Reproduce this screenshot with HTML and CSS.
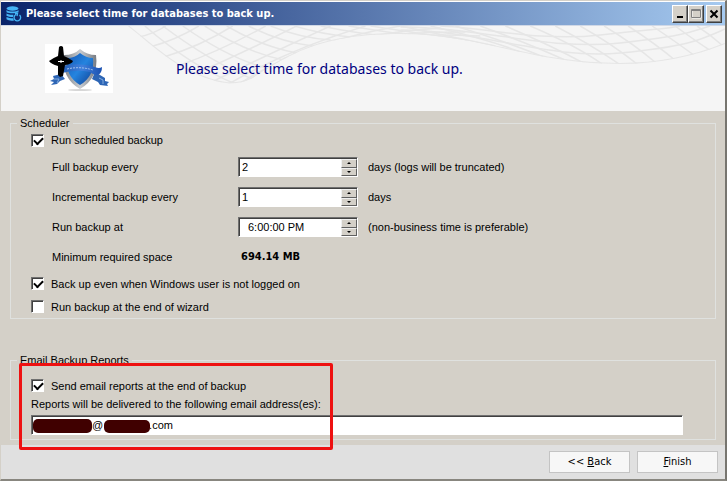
FILE: index.html
```html
<!DOCTYPE html>
<html lang="en">
<head>
<meta charset="utf-8">
<title>Please select time for databases to back up.</title>
<link rel="stylesheet" href="styles.css">
</head>
<body>
<form class="window">
  <header class="titlebar">
    <svg class="app-icon" viewBox="0 0 16 16" aria-hidden="true">
      <g fill="#45b4f5"><ellipse cx="6.5" cy="2.5" rx="6" ry="2.2"/><path d="M.5 4c2 2 10 2 12 0v2.2c-3 1.400-9 1.400-12 0zM.5 7.500c2 1.200 5 1.500 7 1.200L7 11C4 11 2 10.800.5 9.800zM.5 11c2 1 4 1.200 6.500 1.200l1 2.300C5 15 2 14.500.5 13.300z"/></g>
      <path d="M10 8.500a3.300 3.300 0 1 0 3.500.5M9 7.500l2.500 0-.5 2.500" fill="none" stroke="#45b4f5" stroke-width="1.300"/>
    </svg>
    <h1 class="caption">Please select time for databases to back up.</h1>
    <div class="window-buttons">
      <button type="button" aria-label="Minimize"><svg viewBox="0 0 12 12"><path d="M3 8h6v2H3z"/></svg></button>
      <button type="button" aria-label="Maximize"><svg viewBox="0 0 12 12"><path d="M2 2h9v8H2z" fill="none" stroke="#fff"/><path d="M1.500 1.500h9v8h-9z M1 2.500h10" fill="none" stroke="#808080"/></svg></button>
      <button type="button" aria-label="Close" class="close"><svg viewBox="0 0 12 12"><path d="M2.500 2.500l7 7M9.500 2.500l-7 7" stroke="#000" stroke-width="2"/></svg></button>
    </div>
  </header>

  <section class="banner">
    <svg class="mesh" viewBox="0 0 725 85" preserveAspectRatio="none" aria-hidden="true">
      <clipPath id="wave"><path d="M127 0C150 18 170 38 200 50C220 58 235 60 250 53C290 28 320 8 400 8C480 8 530 38 620 38C660 38 695 30 725 18V0Z"/></clipPath>
      <g clip-path="url(#wave)" fill="none" stroke="#e6e6e6" stroke-width="1.500">
        <path d="M127 0C150 18 170 38 200 50C220 58 235 60 250 53C290 28 320 8 400 8C480 8 530 38 620 38C660 38 695 30 725 18" stroke-width="2"/>
        <path d="M144 0Q190 40 235 58M162 0Q210 36 254 54M182 0Q230 34 270 43M204 0Q245 26 283 34M226 0Q260 20 296 27M248 0Q280 16 312 20M270 0Q300 12 330 14M294 0Q320 8 350 11M320 0Q350 6 375 9M348 0L400 8"/>
        <path d="M138 11Q153 8 165 0M149 21Q175 14 198 0M163 31Q200 20 232 0M177 40Q222 24 265 0M194 48Q244 26 296 0M213 55Q264 30 330 0M228 58Q286 24 365 0M240 57Q303 16 400 0M250 53Q320 10 440 2M265 44Q340 5 465 6M282 33Q350 4 480 10"/>
        <path d="M400 4C480 4 550 34 620 27S700 14 725 3M400 1C480 1 550 25 620 17S690 6 710 0M440 0C480 1 540 16 600 9S660 4 680 0"/>
        <path d="M370 0L470 15M400 0L495 20M430 0Q490 14 520 26M455 0Q510 17 543 31M480 0Q535 20 569 36M505 0Q552 20 585 38M530 0Q575 19 602 38M555 0Q590 18 619 38M580 0Q612 18 637 38M604 0Q634 18 656 37M628 0Q656 18 676 35M652 0Q676 16 695 30M675 0Q694 14 711 25M697 0Q711 9 723 20"/>
      </g>
    </svg>
    <svg class="logo" viewBox="0 0 68 49" role="img" aria-label="100% Protection">
      <defs>
        <linearGradient id="steel"><stop stop-color="#7b8086"/><stop offset=".5" stop-color="#c9ccd0"/><stop offset="1" stop-color="#777c83"/></linearGradient>
        <linearGradient id="blue" x2="1" y2="1"><stop stop-color="#1456b4"/><stop offset=".5" stop-color="#2584df"/><stop offset="1" stop-color="#103e92"/></linearGradient>
        <linearGradient id="ribbon"><stop stop-color="#225db5"/><stop offset=".5" stop-color="#3f80dc"/><stop offset="1" stop-color="#1b50b0"/></linearGradient>
      </defs>
      <path fill="#fff" d="M0 0h68v49H0z"/>
      <ellipse cx="35" cy="46" rx="12" ry="1" fill="#d7d7d7"/>
      <path d="M16 30L8 32 9 35 5 37l4 1-3 3 6-1 3-3 5-2zM50 28l10 6 0 3 4 1-2 2 1 2-8-1-2-3-6-3z" fill="#2d65b5"/>
      <path d="M9 35l5 0-2 4M54 34l4 2 0 4" stroke="#82acdf" fill="none"/>
      <path d="M35 5Q42 11 51 11Q54 34 35 45Q16 34 19 11Q29 11 35 5Z" fill="url(#steel)"/>
      <path d="M35 9Q41 14 48 14Q50 32 35 41Q20 32 22 14Q30 14 35 9Z" fill="url(#blue)"/>
      <path d="M17 22Q35 18 50 23 54 25 57 23 57 29 53 31 48 31 45 28 31 25 17 29Z" fill="url(#ribbon)"/>
      <path d="M22 25Q35 22 48 26" stroke="#a6c5ee" stroke-dasharray="2 1" fill="none"/>
      <path d="M14 3Q16 1 18 3L19 12Q24 14 28 17 27 20 20 21L18 32 15 33 13 31 13 22Q6 20 4 17 8 14 13 12Z"/>
      <path d="M13 17.500h6M16 16v3" stroke="#fff"/>
    </svg>
    <h2 class="headline">Please select time for databases to back up.</h2>
  </section>

  <main class="content">
    <fieldset class="group">
      <legend>Scheduler</legend>
      <label class="check first"><input type="checkbox" checked>Run scheduled backup</label>
      <div class="rows">
        <div class="row">
          <label for="full">Full backup every</label>
          <span class="spin"><input id="full" type="text" value="2"><span class="arrows"><button type="button" aria-label="More days"></button><button type="button" aria-label="Fewer days" class="down"></button></span></span>
          <span>days (logs will be truncated)</span>
        </div>
        <div class="row">
          <label for="inc">Incremental backup every</label>
          <span class="spin"><input id="inc" type="text" value="1"><span class="arrows"><button type="button" aria-label="More days"></button><button type="button" aria-label="Fewer days" class="down"></button></span></span>
          <span>days</span>
        </div>
        <div class="row">
          <label for="at">Run backup at</label>
          <span class="spin time"><input id="at" type="text" value="6:00:00 PM"><span class="arrows"><button type="button" aria-label="Later"></button><button type="button" aria-label="Earlier" class="down"></button></span></span>
          <span>(non-business time is preferable)</span>
        </div>
        <div class="row">
          <span>Minimum required space</span>
          <strong>694.14 MB</strong>
        </div>
      </div>
      <label class="check"><input type="checkbox" checked>Back up even when Windows user is not logged on</label>
      <label class="check"><input type="checkbox">Run backup at the end of wizard</label>
    </fieldset>

    <fieldset class="group email">
      <legend>Email Backup Reports</legend>
      <label class="check"><input type="checkbox" checked>Send email reports at the end of backup</label>
      <label class="address-label" for="address">Reports will be delivered to the following email address(es):</label>
      <div class="address">
        <input id="address" type="text" value="                   @               .com">
        <span class="mask user"></span><span class="mask domain"></span>
      </div>
      <div class="highlight"></div>
    </fieldset>
  </main>

  <footer class="footer">
    <button type="button">&lt;&lt; <u>B</u>ack</button>
    <button type="submit"><u>F</u>inish</button>
  </footer>
</form>
</body>
</html>
```
FILE: styles.css
```css
* { box-sizing: border-box; }

body {
  margin: 0;
  background: #d4d0c8;
  color: #000;
  font: 11px/14px "Liberation Sans", Arial, sans-serif;
}

button, input { font: inherit; color: inherit; }

.window {
  display: flex;
  flex-direction: column;
  min-height: 100vh;
  border: 1px solid #d4d0c8;
  border-right: 2px solid #77756f;
  border-bottom: 2px solid #88867f;
}

.titlebar {
  display: flex;
  align-items: center;
  height: 25px;
  padding: 0 3px 0 5px;
  border-top: 1px solid #fff;
  border-bottom: 1px solid #d0d8e6;
  background: linear-gradient(90deg, #0a246a, #a6caf0);
}

.app-icon { width: 16px; height: 16px; margin-right: 4px; }

.caption {
  flex: 1;
  margin: 0;
  color: #fff;
  font: bold 11px/16px "DejaVu Sans Condensed", "DejaVu Sans", sans-serif;
  white-space: nowrap;
}

.window-buttons { display: flex; }

.window-buttons button {
  display: grid;
  place-items: center;
  width: 16px;
  height: 18px;
  padding: 0;
  border: 1px solid;
  border-color: #fff #404040 #404040 #fff;
  background: #d4d0c8;
  box-shadow: inset -1px -1px #808080;
}

.window-buttons .close { margin-left: 2px; }
.window-buttons svg { width: 12px; height: 12px; }

.banner {
  position: relative;
  display: flex;
  align-items: center;
  gap: 63px;
  height: 85px;
  padding-left: 44px;
  background: #f5f5f5;
}

.mesh { position: absolute; inset: 0; width: 100%; height: 100%; }
.logo { position: relative; width: 68px; height: 49px; }

.headline {
  position: relative;
  margin: 0;
  color: #000080;
  font: 14px/20px "Noto Sans", "DejaVu Sans Condensed", sans-serif;
  white-space: nowrap;
}

.content {
  flex: 1;
  display: flex;
  flex-direction: column;
  gap: 34px;
  padding: 5px 9px 3px;
}

.group {
  position: relative;
  min-width: 0;
  margin: 0;
  padding: 0 20px;
  border: 1px solid #dfe1df;
}

.group legend { margin-left: -14px; padding: 0 3px; }

.check { display: flex; align-items: center; gap: 7px; height: 23px; }
.check.first { height: 20px; }

.check input {
  appearance: none;
  width: 13px;
  height: 13px;
  margin: 0;
  border: 1px solid;
  border-color: #707070 #fff #fff #707070;
  background: #fff;
  box-shadow: inset 1px 1px #404040;
}

.check input:checked::after {
  content: "";
  display: block;
  width: 7px;
  height: 4px;
  margin: 2px 0 0 2px;
  border: solid #000;
  border-width: 0 0 2px 2px;
  transform: rotate(-45deg);
}

.rows { padding: 2px 0 0 21px; }

.row {
  display: grid;
  grid-template-columns: 176px 120px 1fr;
  column-gap: 10px;
  align-items: center;
  height: 30px;
}

.row strong {
  padding-left: 3px;
  font: bold 11px/14px "DejaVu Sans Condensed", "DejaVu Sans", sans-serif;
}

.spin, .address {
  display: flex;
  height: 20px;
  border: 1px solid;
  border-color: #707070 #fff #fff #707070;
  background: #fff;
  box-shadow: inset 1px 1px #404040;
}

.spin input, .address input {
  flex: 1;
  min-width: 0;
  padding: 0 0 0 3px;
  border: 0;
  background: none;
}

.spin.time input { padding-left: 9px; }

.arrows { display: flex; flex-direction: column; width: 16px; padding-top: 1px; }

.arrows button {
  flex: 1;
  display: grid;
  place-items: center;
  min-height: 0;
  padding: 0;
  border: 1px solid;
  border-color: #f0f0f0 #606060 #606060 #f0f0f0;
  background: #d4d0c8;
}

.arrows button::before {
  content: "";
  border: 2px solid transparent;
  border-top: 0;
  border-bottom: 2px solid #000;
}

.arrows .down::before { transform: rotate(180deg); }

.email { padding-bottom: 4px; }
.email .check { margin-top: 7px; }
.email .address-label { display: block; }
.address { position: relative; margin: 4px 12px 0 0; }
.address input { padding-left: 2px; }

.mask {
  position: absolute;
  top: 3px;
  height: 14px;
  border-radius: 5px;
  background: #400000;
}

.mask.user { left: 1px; width: 59px; }
.mask.domain { left: 72px; width: 46px; height: 13px; top: 4px; }

.highlight {
  position: absolute;
  top: -4px;
  left: 8px;
  width: 314px;
  height: 87px;
  border: 3px solid #ee1111;
  border-radius: 2px;
  pointer-events: none;
}

.footer {
  display: flex;
  justify-content: flex-end;
  gap: 7px;
  padding: 6px 7px;
  background: #e0e0e0;
}

.footer button {
  width: 81px;
  height: 22px;
  padding: 0;
  border: 1px solid #c4c4c4;
  background: #f7f7f7;
  font: 11px/16px "DejaVu Sans Condensed", "DejaVu Sans", sans-serif;
}
```
